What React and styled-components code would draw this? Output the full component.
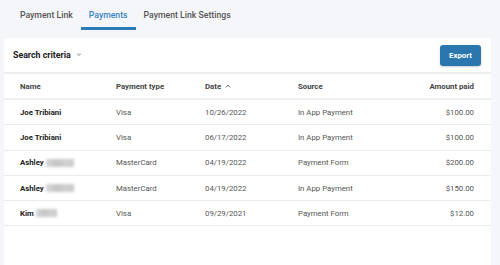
import React from 'react'
import styled, {createGlobalStyle} from 'styled-components'

const GlobalStl = createGlobalStyle`
  body {
    margin: 0;
    background: #f5f6fa;
    font-family: Roboto, "Liberation Sans", sans-serif;
  }
`

const PageStl = styled.div`
  height: 265px;
  overflow: hidden;
  padding: 0 9px 0 4px;
  display: flex;
  flex-direction: column;
`

const TabsStl = styled.div`
  display: flex;
  height: 30px;
  padding-left: 8px;
`

const TabStl = styled.div`
  display: flex;
  align-items: center;
  padding: 3px 8px 0;
  font-size: 8.7px;
  font-weight: 500;
  color: ${p => p.active ? '#3584c2' : '#555'};
  border-bottom: 3px solid ${p => p.active ? '#2b7bb8' : 'transparent'};
`

const CardStl = styled.div`
  margin-top: 8px;
  flex: 1;
  background: #fff;
  border-radius: 3px 3px 0 0;
`

const ToolbarStl = styled.div`
  height: 34px;
  display: flex;
  align-items: center;
  justify-content: space-between;
  padding: 0 10px 0 9px;
  border-bottom: 2px solid #efefef;
`

const CriteriaStl = styled.div`
  display: flex;
  align-items: center;
  gap: 5px;
  font-size: 8.8px;
  font-weight: 700;
  color: #222;
`

const ExportBtnStl = styled.button`
  width: 41px;
  height: 21px;
  border: none;
  border-radius: 3px;
  background: #2a77b0;
  color: #fff;
  font-family: inherit;
  font-size: 7.8px;
  font-weight: 700;
  box-shadow: 0 1px 2px rgba(0, 0, 0, 0.2);
`

const RowStl = styled.div`
  display: grid;
  grid-template-columns: 96px 89px 93px 1fr auto;
  align-items: center;
  height: ${p => p.head ? '24px' : '24.3px'};
  padding: 0 17px 0 16px;
  border-bottom: ${p => p.head ? '2px solid #efefef' : '1px solid #ebebeb'};
  font-size: 7.8px;
  color: ${p => p.head ? '#444' : '#555'};
  font-weight: ${p => p.head ? 700 : 400};
`

const NameStl = styled.div`
  display: flex;
  align-items: center;
  gap: 2px;
  font-weight: 700;
  color: #222;
`

const BlurStl = styled.span`
  display: inline-block;
  width: ${p => p.w}px;
  height: 8px;
  background: linear-gradient(90deg, #d6d6d6, #c4c4c4 40%, #d0d0d0 70%, #c8c8c8);
  filter: blur(1.5px);
`

const HeadCellStl = styled.div`
  display: flex;
  align-items: center;
  gap: 4px;
  justify-self: ${p => p.right ? 'end' : 'start'};
`

const AmountStl = styled.div`
  justify-self: end;
`

const payments = [
  {name: 'Joe Tribiani', type: 'Visa', date: '10/26/2022', source: 'In App Payment', amount: '$100.00'},
  {name: 'Joe Tribiani', type: 'Visa', date: '06/17/2022', source: 'In App Payment', amount: '$100.00'},
  {name: 'Ashley', blur: 28, type: 'MasterCard', date: '04/19/2022', source: 'Payment Form', amount: '$200.00'},
  {name: 'Ashley', blur: 28, type: 'MasterCard', date: '04/19/2022', source: 'In App Payment', amount: '$150.00'},
  {name: 'Kim', blur: 21, type: 'Visa', date: '09/29/2021', source: 'Payment Form', amount: '$12.00'},
]

export default function App() {
  return (
    <PageStl>
      <GlobalStl />
      <TabsStl>
        <TabStl>Payment Link</TabStl>
        <TabStl active>Payments</TabStl>
        <TabStl>Payment Link Settings</TabStl>
      </TabsStl>

      <CardStl>
        <ToolbarStl>
          <CriteriaStl>
            Search criteria
            <svg width="6" height="4" viewBox="0 0 6 4">
              <path d="M0 0.5 L6 0.5 L3 3.5 Z" fill="#c4c4c4" />
            </svg>
          </CriteriaStl>
          <ExportBtnStl>Export</ExportBtnStl>
        </ToolbarStl>

        <RowStl head>
          <HeadCellStl>Name</HeadCellStl>
          <HeadCellStl>Payment type</HeadCellStl>
          <HeadCellStl>
            Date
            <svg width="6" height="4" viewBox="0 0 6 4">
              <path d="M0.8 3.5 L3 1 L5.2 3.5" stroke="#666" strokeWidth="0.9" fill="none" />
            </svg>
          </HeadCellStl>
          <HeadCellStl>Source</HeadCellStl>
          <HeadCellStl right>Amount paid</HeadCellStl>
        </RowStl>

        {payments.map((p, i) => (
          <RowStl key={i}>
            <NameStl>
              {p.name}
              {p.blur && <BlurStl w={p.blur} />}
            </NameStl>
            <div>{p.type}</div>
            <div>{p.date}</div>
            <div>{p.source}</div>
            <AmountStl>{p.amount}</AmountStl>
          </RowStl>
        ))}
      </CardStl>
    </PageStl>
  )
}
